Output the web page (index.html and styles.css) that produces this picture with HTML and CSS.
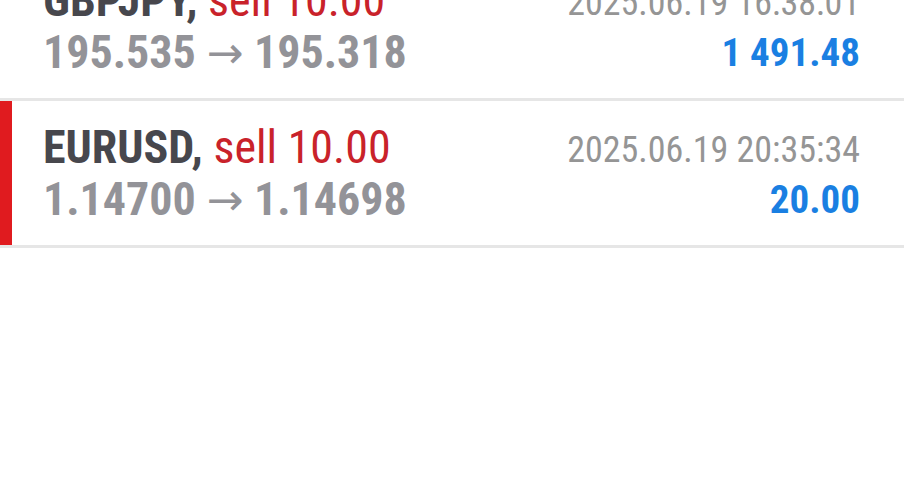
FILE: index.html
```html
<!DOCTYPE html>
<html lang="en">
<head>
  <meta charset="UTF-8">
  <title>History</title>
  <link rel="stylesheet" href="styles.css">
</head>
<body>
  <ul class="deals">
    <li class="deal">
      <div class="deal-main">
        <div class="deal-title"><span class="symbol">GBPJPY,</span> <span class="sell">sell 10.00</span></div>
        <div class="deal-prices">195.535 <span class="arrow">&rarr;</span> 195.318</div>
      </div>
      <div class="deal-side">
        <div class="deal-time">2025.06.19 16:38:01</div>
        <div class="deal-profit">1 491.48</div>
      </div>
    </li>
    <li class="deal active">
      <div class="deal-main">
        <div class="deal-title"><span class="symbol">EURUSD,</span> <span class="sell">sell 10.00</span></div>
        <div class="deal-prices">1.14700 <span class="arrow">&rarr;</span> 1.14698</div>
      </div>
      <div class="deal-side">
        <div class="deal-time">2025.06.19 20:35:34</div>
        <div class="deal-profit">20.00</div>
      </div>
    </li>
  </ul>
</body>
</html>
```

FILE: styles.css
```css
body {
  margin: 0;
  background: #ffffff;
  font-family: "Roboto Condensed", Roboto, sans-serif;
}

.deals {
  list-style: none;
  margin: -46px 0 0 0;
  padding: 0;
}

.deal {
  display: flex;
  justify-content: space-between;
  height: 104px;
  padding: 20px 44px 20px 43px;
  border-bottom: 3px solid #e6e6e6;
}

.deal.active {
  box-shadow: inset 12px 0 0 #e01b1f;
}

.deal-title,
.deal-prices {
  font-size: 46px;
  line-height: 52px;
  white-space: nowrap;
}

.symbol {
  color: #47474d;
  font-weight: bold;
}

.sell {
  color: #c9222a;
}

.deal-prices {
  color: #939398;
  font-weight: bold;
}

.arrow {
  font-family: "DejaVu Sans", sans-serif;
  font-weight: normal;
  font-size: 44px;
}

.deal-side {
  text-align: right;
}

.deal-time {
  color: #959595;
  font-size: 36px;
  line-height: 52px;
  padding-top: 3px;
}

.deal-profit {
  color: #1a7fe2;
  font-size: 39px;
  font-weight: bold;
  line-height: 49px;
}
```
